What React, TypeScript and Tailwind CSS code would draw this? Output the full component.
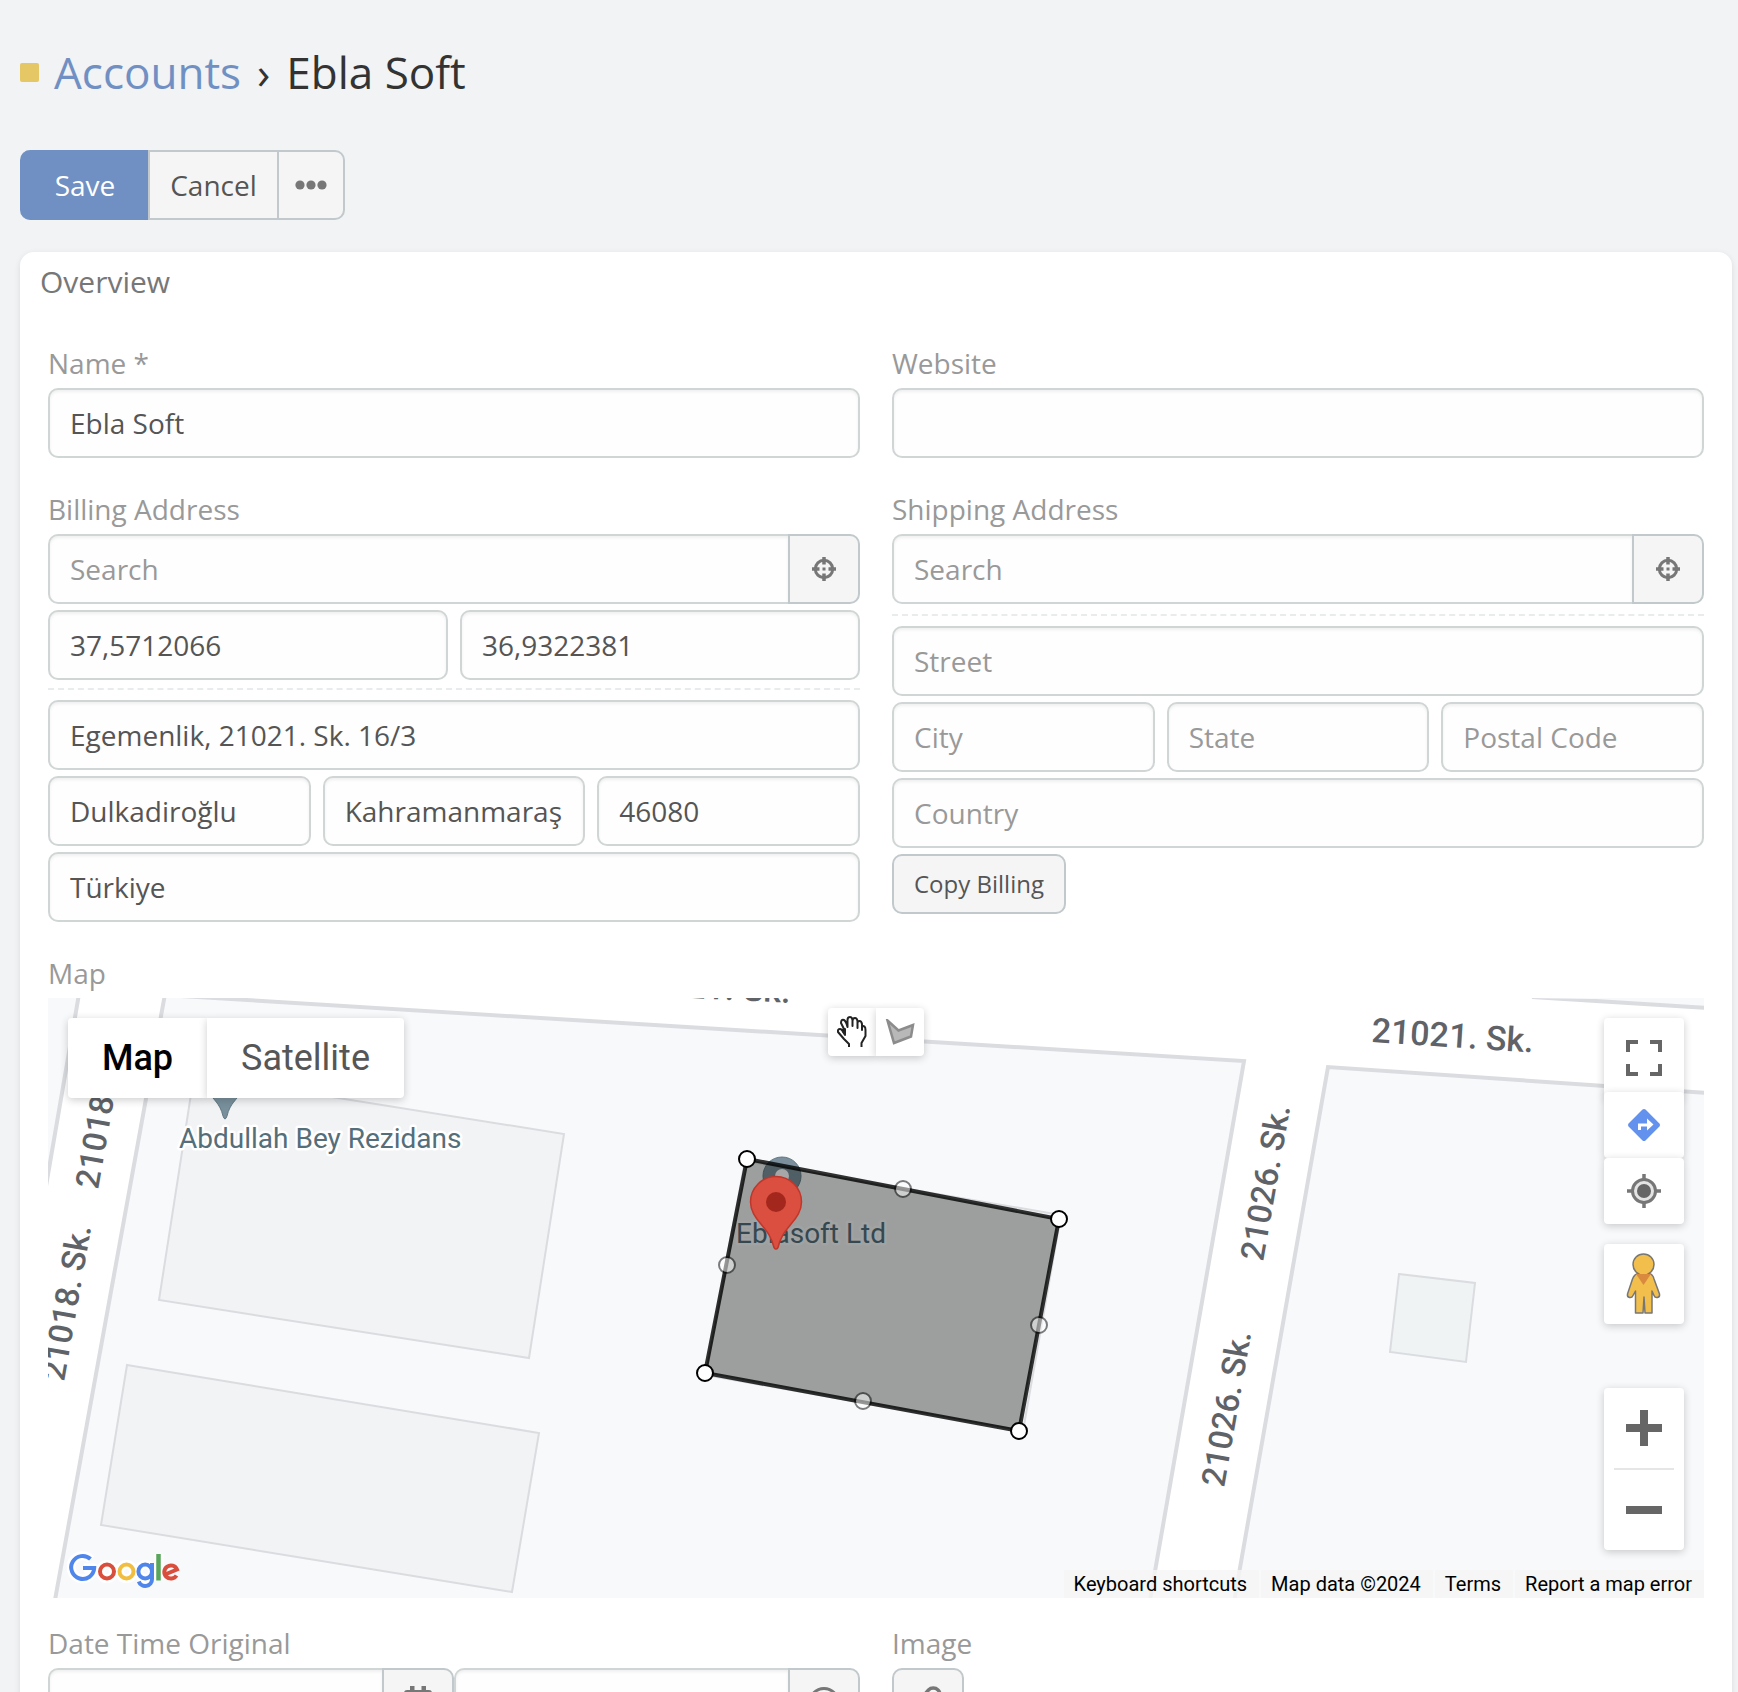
import React from 'react';

const FIELD =
  'h-[70px] w-full min-w-0 border-2 border-[#d0d5d5] bg-[#fefefe] px-5 text-[28px] text-[#555] placeholder-[#999] outline-none shadow-[inset_0_2px_3px_rgba(0,0,0,0.06)]';
const LABEL = 'block text-[28px] leading-9 text-[#999]';
const ADDON =
  'flex h-[70px] w-[72px] shrink-0 items-center justify-center border-2 border-[#c1c9cc] bg-[#f5f5f5] text-[#777]';

function Field({ label, value, placeholder }: { label: string; value?: string; placeholder?: string }) {
  return <input aria-label={label} defaultValue={value} placeholder={placeholder} className={FIELD + ' rounded-[10px]'} />;
}

function CrosshairIcon() {
  return (
    <svg width="24" height="24" viewBox="0 0 24 24" fill="none" stroke="currentColor" strokeWidth="3.500" aria-hidden="true">
      <circle cx="12" cy="12" r="8.700" strokeWidth="3" />
      <path d="M12 0v7.500M12 16.500v7.500M0 12h7.500M16.500 12h7.500" />
      <rect x="10.500" y="10.500" width="3" height="3" fill="currentColor" stroke="none" />
    </svg>
  );
}

function AddressSearch({ id, label }: { id: string; label: string }) {
  return (
    <>
      <label htmlFor={id} className={LABEL}>{label}</label>
      <div className="mt-[7px] flex">
        <input id={id} placeholder="Search" className={FIELD + ' rounded-l-[10px] border-r-0'} />
        <button type="button" aria-label="Pick location" className={ADDON + ' rounded-r-[10px]'}>
          <CrosshairIcon />
        </button>
      </div>
    </>
  );
}

function GoogleLogo() {
  return (
    <svg width="114" height="42" viewBox="0 0 114 42" fill="none" role="img" aria-label="Google">
      <g stroke="#fff" strokeWidth="9" strokeLinejoin="round">
        <path d="M24 9.500A11.500 11.500 0 1 0 27 18H17" />
        <circle cx="40" cy="21.500" r="7" />
        <circle cx="59.500" cy="21.500" r="7" />
        <circle cx="78.500" cy="21.500" r="7" />
        <path d="M86 14v15M92 4v26" />
      </g>
      <path d="M23.500 9A11.500 11.500 0 1 0 27.200 18H16" stroke="#4f86ec" strokeWidth="4" />
      <circle cx="40" cy="21.500" r="7" stroke="#d94f3d" strokeWidth="4" />
      <circle cx="59.500" cy="21.500" r="7" stroke="#f2be42" strokeWidth="4" />
      <path d="M85 13v16a6.800 6.800 0 0 1-13.200 2.500M85 21.500a6.800 7 0 1 1-13.600 0a6.800 7 0 1 1 13.600 0" stroke="#4f86ec" strokeWidth="4" />
      <path d="M91.500 4v26.500" stroke="#58a65c" strokeWidth="4.500" />
      <path d="M98 24.500l12-5a6.600 6.600 0 1 0-.5 6" stroke="#d94f3d" strokeWidth="4" />
    </svg>
  );
}

function MapCanvas() {
  return (
    <svg
      className="absolute inset-0 h-full w-full font-[Roboto,sans-serif]"
      viewBox="0 0 1656 600"
      preserveAspectRatio="xMidYMid slice"
      role="img"
      aria-label="Street map"
    >
      <rect width="1656" height="600" fill="#fff" />
      <g fill="#f8f9fb" stroke="#dadce0" strokeWidth="4">
        <path d="M31 -4L-2 188V-4z" />
        <path d="M117 -4L7 602L1102 602L1196 63L100 -4z" />
        <path d="M1186 604L1280 69L1660 95V604z" />
        <path d="M1484 -1L1660 10V-4z" />
      </g>
      <g fill="#f1f3f4" stroke="#dadce0" strokeWidth="2">
        <path d="M146 77L516 136L481 360L111 302z" />
        <path d="M79 367L491 435L464 594L53 527z" />
        <path d="M697 163L1013 217L975 433L657 377z" />
        <path d="M1351 276L1427 285L1418 364L1342 354z" fill="#eff3f4" />
      </g>
      <g className="fill-[#5f6368] text-[34px] font-medium">
        <text transform="translate(580 -3) rotate(2.8)">21021. Sk.</text>
        <text transform="translate(1323 44) rotate(3.7)">21021. Sk.</text>
      </g>
      <g className="fill-[#5f6368] text-[33px] font-medium">
        <text transform="translate(50 192) rotate(-80)">21018. Sk.</text>
        <text transform="translate(16 384) rotate(-80)">21018. Sk.</text>
        <text transform="translate(1215 264) rotate(-80)">21026. Sk.</text>
        <text transform="translate(1176 490) rotate(-80)">21026. Sk.</text>
      </g>
      <path d="M161 94h32c-4 8-11 11-14 24q-2 6-4 0c-3-13-10-16-14-24z" fill="#78909c" stroke="#607985" strokeWidth="1" />
      <circle cx="734" cy="178" r="19" fill="#7b909c" stroke="#5f7985" />
      <circle cx="734" cy="178" r="7" fill="#fff" />
      <g className="fill-[#546e7a] text-[28px]" stroke="#fff" strokeWidth="5" strokeLinejoin="round" paintOrder="stroke">
        <text x="131" y="150">Abdullah Bey Rezidans</text>
        <text x="688" y="245" stroke="#f8f9fb">Eblasoft Ltd</text>
      </g>
      <path d="M699 161L1011 221L971 433L657 375z" fill="#000300" fillOpacity="0.35" />
      <path d="M699 161L1011 221L971 433L657 375z" fill="none" stroke="#000" strokeOpacity="0.8" strokeWidth="4" />
      <g fill="#fff" stroke="#000" strokeWidth="2">
        <circle cx="699" cy="161" r="8" />
        <circle cx="1011" cy="221" r="8" />
        <circle cx="971" cy="433" r="8" />
        <circle cx="657" cy="375" r="8" />
        <g opacity="0.5">
          <circle cx="855" cy="191" r="8" />
          <circle cx="991" cy="327" r="8" />
          <circle cx="815" cy="403" r="8" />
          <circle cx="679" cy="267" r="8" />
        </g>
      </g>
      <path
        d="M728 178.500c-14 0-25.500 11.500-25.500 25.500c0 9 5 15.500 10 21.500c6 7.500 11 13 13.500 24q2 3 4 0c2.500-11 7.500-16.500 13.500-24c5-6 10-12.500 10-21.500c0-14-11.500-25.500-25.500-25.500z"
        fill="#da4f3f"
        stroke="#bf372b"
        strokeWidth="1.500"
      />
      <circle cx="728" cy="204" r="10" fill="#a3271d" />
    </svg>
  );
}

const CONTROL = 'flex w-20 items-center justify-center rounded-[4px] bg-white shadow-[0_2px_8px_rgba(0,0,0,0.2)]';

function MapControls() {
  return (
    <div className="absolute right-5 top-5 flex flex-col">
      <button type="button" aria-label="Toggle fullscreen" className={CONTROL + ' h-20'}>
        <svg width="36" height="36" viewBox="0 0 36 36" fill="none" stroke="#666" strokeWidth="4" aria-hidden="true">
          <path d="M2 12V2h10M24 2h10v10M34 24v10H24M12 34H2V24" />
        </svg>
      </button>
      <button type="button" aria-label="Directions" className={CONTROL + ' -mt-1.5 h-[66px]'}>
        <svg width="34" height="34" viewBox="0 0 34 34" aria-hidden="true">
          <path d="M15.500 1.600q1.500-1.400 3 0L32.400 15.500q1.400 1.500 0 3L18.500 32.400q-1.500 1.400-3 0L1.600 18.500q-1.400-1.500 0-3z" fill="#6391ee" />
          <path d="M11 22v-6.500h9V10.500l6.500 6l-6.500 6V18.500h-6V22z" fill="#fff" />
        </svg>
      </button>
      <button type="button" aria-label="My location" className={CONTROL + ' h-[66px]'}>
        <svg width="34" height="34" viewBox="0 0 34 34" fill="none" stroke="#777" aria-hidden="true">
          <circle cx="17" cy="17" r="11.500" fill="#e4e4e4" strokeWidth="3" />
          <path d="M17 0v5M17 29v5M0 17h5M29 17h5" strokeWidth="3.500" />
          <circle cx="17" cy="17" r="7" fill="#666" stroke="none" />
        </svg>
      </button>
      <button type="button" aria-label="Street View" className={CONTROL + ' mt-5 h-20'}>
        <svg width="36" height="62" viewBox="0 0 36 62" aria-hidden="true">
          <g fill="#f3bf4c" stroke="#777" strokeWidth="1.500" strokeLinejoin="round">
            <path d="M9 22q1.500-1.500 4-1.500h9q3 0 4 1.500q1.500 1.500 2 4l5.500 15q.5 3-2 3.500q-2.500.5-3.500-2L26 38v22h-7l-1-16l-1 16h-7.500V38L7 42.500q-1 2.500-3.500 2q-2.500-.5-2-3.500L6.500 26q1-2.500 2.500-4z" />
            <circle cx="17.500" cy="11.500" r="10.500" />
          </g>
          <path d="M10 21h15l-7.500 11z" fill="#d98a3f" />
        </svg>
      </button>
      <div className="mt-16 flex w-20 flex-col items-center rounded-[4px] bg-white shadow-[0_2px_8px_rgba(0,0,0,0.2)]">
        <button type="button" aria-label="Zoom in" className="flex h-20 w-20 items-center justify-center">
          <svg width="36" height="36" viewBox="0 0 36 36" aria-hidden="true">
            <path d="M14 0h8v14h14v8H22v14h-8V22H0v-8h14z" fill="#666" />
          </svg>
        </button>
        <div className="h-0.5 w-[60px] bg-[#e6e6e6]" />
        <button type="button" aria-label="Zoom out" className="flex h-20 w-20 items-center justify-center">
          <svg width="36" height="8" viewBox="0 0 36 8" aria-hidden="true">
            <path d="M0 0h36v8H0z" fill="#666" />
          </svg>
        </button>
      </div>
    </div>
  );
}

function DrawingTools() {
  const tool = 'flex size-12 items-center justify-center bg-white shadow-[0_2px_8px_rgba(0,0,0,0.2)]';
  return (
    <div className="absolute left-1/2 top-2.5 flex -translate-x-1/2">
      <button type="button" aria-label="Stop drawing" className={tool + ' rounded-l-[4px]'}>
        <svg width="30" height="32" viewBox="0 0 30 32" fill="none" stroke="#222" strokeWidth="2" strokeLinejoin="round" aria-hidden="true">
          <path d="M12 31v-3l-5-5l-6-7q-.5-3 2-3q2 0 4 4V13L4 7q0-4 3-3q2 1 3.500 7V4q0-3 2.500-3q2 0 2.500 3v6V5q0-3 2.500-3q2 0 2.500 3v7V7q0-2 2-2t2.500 3v6V11q1-1.500 2.500-.5q1 1 1 3.500v6l-4 7v4" />
          <path d="M5 14l3-1v6z" fill="#111" />
        </svg>
      </button>
      <button type="button" aria-label="Draw a shape" className={tool + ' rounded-r-[4px]'}>
        <svg width="30" height="26" viewBox="0 0 30 26" aria-hidden="true">
          <path d="M2.500 1.500l11 10L28 6l-2 11.500L9 24z" fill="#b8b8b8" stroke="#8c8c8c" strokeWidth="2.500" />
        </svg>
      </button>
    </div>
  );
}

function MapView() {
  const credit = 'bg-[#f5f5f5]/80 pl-2.5 pr-3';
  return (
    <div className="relative mt-[7px] h-[600px] overflow-hidden font-[Roboto,sans-serif]">
      <MapCanvas />
      <div className="absolute left-5 top-5 flex text-[36px] leading-[80px]">
        <button type="button" className="w-[139px] rounded-l-[4px] bg-white font-medium text-black shadow-[0_2px_8px_rgba(0,0,0,0.2)]">
          Map
        </button>
        <button type="button" className="w-[197px] rounded-r-[4px] bg-white text-[#565656] shadow-[0_2px_8px_rgba(0,0,0,0.2)]">
          Satellite
        </button>
      </div>
      <DrawingTools />
      <MapControls />
      <div className="absolute bottom-1.5 left-[19px]">
        <GoogleLogo />
      </div>
      <div className="absolute bottom-0 right-0 flex gap-0.5 text-[20px] leading-7 text-black">
        <button type="button" className={credit}>Keyboard shortcuts</button>
        <span className={credit}>Map data ©2024</span>
        <a href="#terms" className={credit}>Terms</a>
        <a href="#report" className={credit}>Report a map error</a>
      </div>
    </div>
  );
}

function Overview() {
  return (
    <section className="mt-8 min-h-screen rounded-[14px] bg-white px-7 shadow-[0_2px_6px_rgba(0,0,0,0.1)]">
      <h2 className="-ml-2 pt-2.5 text-[30px] leading-10 text-[#777]">Overview</h2>
      <div className="mt-[43px] grid grid-cols-2 gap-x-8">
        <div>
          <label htmlFor="name" className={LABEL}>Name *</label>
          <input id="name" defaultValue="Ebla Soft" className={FIELD + ' mt-[7px] rounded-[10px]'} />
        </div>
        <div>
          <label htmlFor="website" className={LABEL}>Website</label>
          <input id="website" className={FIELD + ' mt-[7px] rounded-[10px]'} />
        </div>
      </div>
      <div className="mt-[33px] grid grid-cols-2 gap-x-8">
        <div>
          <AddressSearch id="billing" label="Billing Address" />
          <div className="mt-1.5 grid grid-cols-2 gap-x-3">
            <Field label="Latitude" value="37,5712066" />
            <Field label="Longitude" value="36,9322381" />
          </div>
          <div className="mt-2 border-t-2 border-dashed border-[#e8eced]" />
          <div className="mt-2.5 grid gap-y-1.5">
            <Field label="Street" value="Egemenlik, 21021. Sk. 16/3" />
            <div className="grid grid-cols-3 gap-x-3">
              <Field label="City" value="Dulkadiroğlu" />
              <Field label="State" value="Kahramanmaraş" />
              <Field label="Postal Code" value="46080" />
            </div>
            <Field label="Country" value="Türkiye" />
          </div>
        </div>
        <div>
          <AddressSearch id="shipping" label="Shipping Address" />
          <div className="mt-2.5 border-t-2 border-dashed border-[#e8eced]" />
          <div className="mt-2.5 grid gap-y-1.5">
            <Field label="Street" placeholder="Street" />
            <div className="grid grid-cols-3 gap-x-3">
              <Field label="City" placeholder="City" />
              <Field label="State" placeholder="State" />
              <Field label="Postal Code" placeholder="Postal Code" />
            </div>
            <Field label="Country" placeholder="Country" />
            <button type="button" className="h-[60px] justify-self-start rounded-[10px] border-2 border-[#c1c9cc] bg-[#f5f5f5] px-5 text-[24px] text-[#555]">
              Copy Billing
            </button>
          </div>
        </div>
      </div>
      <h3 className={LABEL + ' mt-[33px]'}>Map</h3>
      <MapView />
      <div className="mt-[27px] grid grid-cols-2 gap-x-8">
        <div>
          <label htmlFor="date" className={LABEL}>Date Time Original</label>
          <div className="mt-[7px] flex">
            <div className="flex flex-1">
              <input id="date" className={FIELD + ' rounded-l-[10px] border-r-0'} />
              <button type="button" aria-label="Pick date" className={ADDON + ' rounded-r-[10px]'}>
                <svg width="28" height="34" viewBox="0 0 28 34" fill="currentColor" aria-hidden="true">
                  <path d="M6 0h4.500v4h7V0H22v4h3q3 0 3 3v24q0 3-3 3H3q-3 0-3-3V7q0-3 3-3h3zM4 13v17h20V13z" fillRule="evenodd" />
                </svg>
              </button>
            </div>
            <div className="flex flex-1">
              <input aria-label="Time" className={FIELD + ' rounded-l-[10px] border-r-0'} />
              <button type="button" aria-label="Pick time" className={ADDON + ' rounded-r-[10px]'}>
                <svg width="32" height="32" viewBox="0 0 32 32" fill="none" stroke="currentColor" strokeWidth="3" aria-hidden="true">
                  <circle cx="16" cy="16" r="14.500" />
                  <path d="M16 7v9l6 4" />
                </svg>
              </button>
            </div>
          </div>
        </div>
        <div>
          <span className={LABEL}>Image</span>
          <button type="button" aria-label="Attach image" className={ADDON + ' mt-[7px] rounded-[10px]'}>
            <svg width="30" height="34" viewBox="0 0 30 34" fill="none" stroke="currentColor" strokeWidth="3.500" strokeLinecap="round" aria-hidden="true">
              <path d="M20 11L10 22a2.500 2.500 0 0 0 4 4l11-12.500a6.500 6.500 0 0 0-9.500-9.500L5 16a9 9 0 0 0 13 13l8-9" />
            </svg>
          </button>
        </div>
      </div>
    </section>
  );
}

export default function App() {
  const group = 'h-[70px] border-2 border-[#c1c9cc] bg-[#f5f5f5] text-[#555]';
  return (
    <main className="h-screen overflow-hidden bg-[#f1f3f5] pl-5 pr-1.5 pt-[42px] font-['Open_Sans',sans-serif] text-[28px]">
      <h1 className="flex items-center text-[44px] leading-[60px] text-[#333]">
        <span className="mr-[15px] size-[19px] rounded-[2px] bg-[#e6c766]" />
        <a href="#accounts" className="text-[#7090c3]">Accounts</a>
        <span className="mx-4">›</span>
        <span>Ebla Soft</span>
      </h1>
      <div className="mt-12 flex">
        <button type="button" className="h-[70px] w-32 rounded-l-[10px] border-l-2 border-[#7090c3] bg-[#7090c3] text-white">Save</button>
        <button type="button" className={group + ' w-[131px]'}>Cancel</button>
        <button type="button" aria-label="More actions" className={group + ' -ml-0.5 flex w-[68px] items-center justify-center rounded-r-[10px]'}>
          <svg width="32" height="10" viewBox="0 0 32 10" fill="#777" aria-hidden="true">
            <circle cx="5" cy="5" r="4.600" />
            <circle cx="16" cy="5" r="4.600" />
            <circle cx="27" cy="5" r="4.600" />
          </svg>
        </button>
      </div>
      <Overview />
    </main>
  );
}
